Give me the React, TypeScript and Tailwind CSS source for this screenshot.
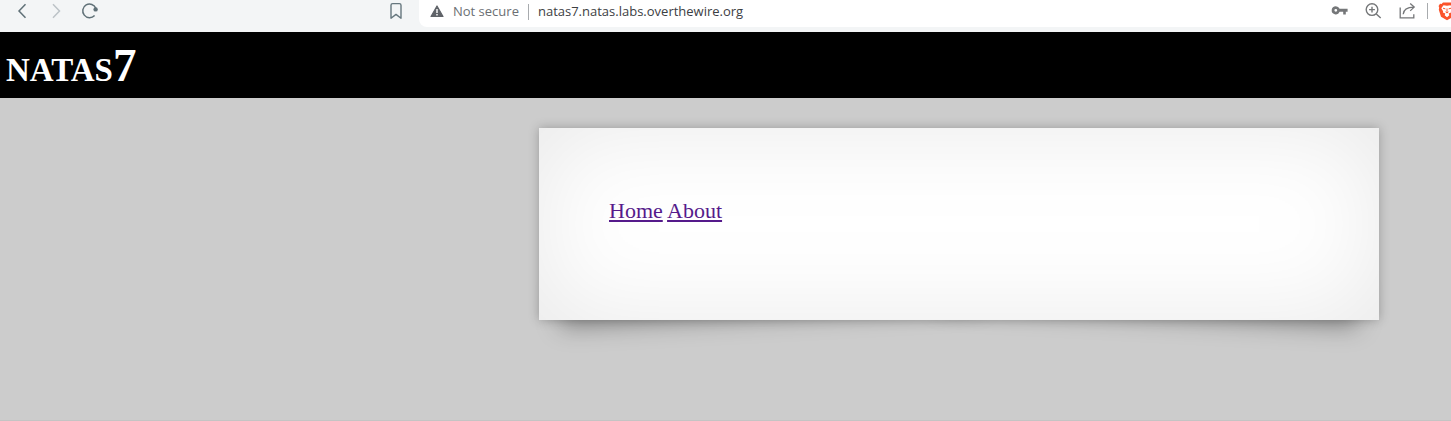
function BrowserBar() {
  return (
    <div className="flex h-8 items-start bg-[#f3f5f6] font-['Open_Sans',sans-serif] text-[13px]">
      <div className="flex w-[419px] shrink-0 items-center justify-between pl-3 pr-3">
        <div className="flex gap-[14px]">
          <button aria-label="Back" className="text-[#5f7077]">
            <svg width="20" height="22" viewBox="0 0 20 22" fill="none" stroke="currentColor" strokeWidth="1.5">
              <path d="M13.5 4.2 7 11l6.5 6.8" />
            </svg>
          </button>
          <button aria-label="Forward" className="text-[#bcc3c7]">
            <svg width="20" height="22" viewBox="0 0 20 22" fill="none" stroke="currentColor" strokeWidth="1.5">
              <path d="M7 4.2 13.5 11 7 17.8" />
            </svg>
          </button>
          <button aria-label="Reload" className="text-[#5f7077]">
            <svg width="20" height="22" viewBox="0 0 20 22" fill="none" stroke="currentColor" strokeWidth="1.5">
              <path d="M14.6 15.4A6.8 6.8 0 1 1 15.9 8.4" />
              <circle cx="15.6" cy="9.4" r="2.2" fill="currentColor" stroke="none" />
            </svg>
          </button>
        </div>
        <button aria-label="Bookmark" className="text-[#66777e]">
          <svg width="22" height="22" viewBox="0 0 22 22" fill="none" stroke="currentColor" strokeWidth="1.4">
            <path d="M6 5.2c0-1 .6-1.6 1.6-1.6h6.8c1 0 1.6.6 1.6 1.6v13L11 14.4 6 18.2Z" strokeLinejoin="round" />
          </svg>
        </button>
      </div>
      <div className="flex h-[27px] min-w-0 flex-1 items-start rounded-bl-lg bg-white pl-[10px]">
        <div className="flex h-6 flex-1 items-center">
          <svg width="16" height="22" viewBox="0 0 16 22" aria-hidden="true">
            <path d="M8 5 14 15.5H2Z" fill="#5f6368" stroke="#5f6368" strokeWidth="1.2" strokeLinejoin="round" />
            <path d="M8 8v4M8 13v1.6" stroke="#fff" strokeWidth="1.4" />
          </svg>
          <span className="ml-2 whitespace-nowrap text-[#6b6f73]">Not secure</span>
          <span className="mx-[9px] h-4 w-px bg-[#a8abae]" />
          <input
            aria-label="Address"
            defaultValue="natas7.natas.labs.overthewire.org"
            className="min-w-0 flex-1 bg-transparent text-[#3c4043] outline-none"
          />
        </div>
        <div className="flex h-[22px] shrink-0 items-center text-[#757779]">
          <button aria-label="Passwords">
            <svg width="18" height="22" viewBox="0 0 18 22">
              <path
                fill="currentColor"
                fillRule="evenodd"
                d="M4.8 6.2a4.1 4.1 0 1 0 3.8 5.6h3.6v2.6h2.6v-2.6h1.8V8.8h-8A4.1 4.1 0 0 0 4.8 6.2Zm0 2.7a1.4 1.4 0 1 1 0 2.8 1.4 1.4 0 0 1 0-2.8Z"
              />
            </svg>
          </button>
          <button aria-label="Zoom" className="ml-4">
            <svg width="18" height="22" viewBox="0 0 18 22" fill="none" stroke="currentColor" strokeWidth="1.4">
              <circle cx="7" cy="9.6" r="5.8" />
              <path d="M11.3 13.9 15.7 18M7 6.7v5.8M4.1 9.6h5.8" />
            </svg>
          </button>
          <button aria-label="Share" className="ml-4">
            <svg width="18" height="22" viewBox="0 0 18 22" fill="none" stroke="currentColor" strokeWidth="1.3">
              <path d="M1.2 7.5v10.3h13.6v-3.6" />
              <path d="M4.2 14.3c.3-4.6 3.6-7.2 10.6-7.2M11.2 3.4l4 3.7-4 3.8" />
            </svg>
          </button>
          <span className="ml-2.5 h-4 w-px bg-[#a8abae]" />
          <button aria-label="Shields" className="ml-2.5 w-[13px] overflow-hidden">
            <svg width="18" height="22" viewBox="0 0 18 22">
              <path fill="#fb542b" d="m5 2.5h8l1.4 1.5 1.6-.2 1.4 2.2-.6 1.7.4 2-2.2 7L9 20.3l-6-3.6-2.2-7 .4-2L.6 6 2 3.8l1.6.2Z" />
              <path
                fill="#fff"
                d="M5.5 5.2 9 5.8l3.5-.6 2.2 3-1.8 3 .2 1.2-2.4 1.2.6 1.6L9 17.2l-2.3-2 .6-1.6-2.4-1.2.2-1.2-1.8-3Z"
              />
              <path fill="none" stroke="#fb542b" strokeWidth="1" d="m5 8.2 2.4.7M13 8.2l-2.4.7M9 8.5v4M7.5 11.8 9 13l1.5-1.2" />
            </svg>
          </button>
        </div>
      </div>
    </div>
  );
}

export default function App() {
  return (
    <div className="flex min-h-screen flex-col border-b border-[#c4c4c4] bg-[#cccccc] font-['Liberation_Serif',serif]">
      <BrowserBar />
      <header className="bg-black px-[6px] py-2">
        <h1 className="text-[47px] font-bold leading-[50px] text-white [font-variant:small-caps]">natas7</h1>
      </header>
      <main className="isolate px-[72px] pt-[30px]">
        <div className="relative ml-auto w-[840px] max-w-full">
          <div className="absolute bottom-[22px] left-[20px] -z-10 h-1/5 w-1/2 -rotate-3 shadow-[0_18px_24px_rgba(0,0,0,0.35)]" />
          <div className="absolute bottom-[22px] right-[20px] -z-10 h-1/5 w-1/2 rotate-3 shadow-[0_18px_24px_rgba(0,0,0,0.35)]" />
          <div className="bg-white p-[70px] text-[22px] leading-[26px] shadow-[0_0_10px_rgba(0,0,0,0.25),inset_0_0_100px_rgba(0,0,0,0.09)]">
            <nav className="pb-[26px] text-[#551a8b]">
              <a href="#home" className="underline">Home</a>{" "}
              <a href="#about" className="underline">About</a>
            </nav>
          </div>
        </div>
      </main>
    </div>
  );
}
